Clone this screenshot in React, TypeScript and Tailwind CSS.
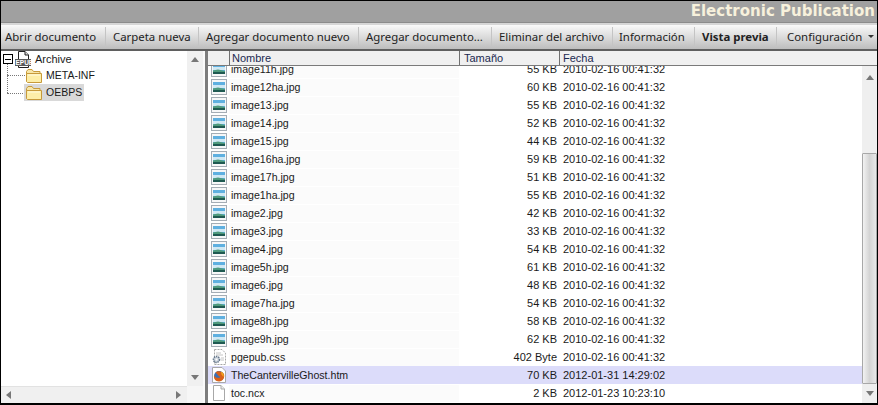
const toolbar = [
  { label: "Abrir documento", width: "w-[105px]", pad: "pl-[4px]" },
  { label: "Carpeta nueva", width: "w-[93px]", pad: "pl-[7px]" },
  { label: "Agregar documento nuevo", width: "w-[160px]", pad: "pl-[7px]" },
  { label: "Agregar documento...", width: "w-[133px]", pad: "pl-[7px]" },
  { label: "Eliminar del archivo", width: "w-[121px]", pad: "pl-[7px]" },
  { label: "Información", width: "w-[82px]", pad: "pl-[6px]" },
  { label: "Vista previa", width: "w-[82px]", pad: "pl-[7px]", bold: true },
];

const files = [
  ["image11h.jpg", "55 KB", "2010-02-16 00:41:32", "img"],
  ["image12ha.jpg", "60 KB", "2010-02-16 00:41:32", "img"],
  ["image13.jpg", "55 KB", "2010-02-16 00:41:32", "img"],
  ["image14.jpg", "52 KB", "2010-02-16 00:41:32", "img"],
  ["image15.jpg", "44 KB", "2010-02-16 00:41:32", "img"],
  ["image16ha.jpg", "59 KB", "2010-02-16 00:41:32", "img"],
  ["image17h.jpg", "51 KB", "2010-02-16 00:41:32", "img"],
  ["image1ha.jpg", "55 KB", "2010-02-16 00:41:32", "img"],
  ["image2.jpg", "42 KB", "2010-02-16 00:41:32", "img"],
  ["image3.jpg", "33 KB", "2010-02-16 00:41:32", "img"],
  ["image4.jpg", "54 KB", "2010-02-16 00:41:32", "img"],
  ["image5h.jpg", "61 KB", "2010-02-16 00:41:32", "img"],
  ["image6.jpg", "48 KB", "2010-02-16 00:41:32", "img"],
  ["image7ha.jpg", "54 KB", "2010-02-16 00:41:32", "img"],
  ["image8h.jpg", "58 KB", "2010-02-16 00:41:32", "img"],
  ["image9h.jpg", "62 KB", "2010-02-16 00:41:32", "img"],
  ["pgepub.css", "402 Byte", "2010-02-16 00:41:32", "css"],
  ["TheCantervilleGhost.htm", "70 KB", "2012-01-31 14:29:02", "htm"],
  ["toc.ncx", "2 KB", "2012-01-23 10:23:10", "doc"],
];

function ImageIcon() {
  return (
    <svg width="16" height="16" viewBox="0 0 16 16" className="shrink-0">
      <rect x="0.5" y="0.5" width="15" height="15" fill="#f6f7f8" stroke="#a4adb5" />
      <rect x="2" y="3" width="12" height="10" fill="#5fb0e0" />
      <rect x="2" y="6" width="12" height="3" fill="#cfe8f4" />
      <path d="M2 9.5 L7 8.5 L14 10 L14 13 L2 13 Z" fill="#4f9a7c" />
      <rect x="2" y="11" width="12" height="2" fill="#1f5a52" />
    </svg>
  );
}

function BlankDoc() {
  return (
    <svg width="16" height="16" viewBox="0 0 16 16" className="shrink-0">
      <path d="M2.5 0.5 H10 L13.5 4 V15.5 H2.5 Z" fill="#fff" stroke="#a8a8a8" />
      <path d="M10 0.5 V4 H13.5" fill="#eee" stroke="#a8a8a8" />
    </svg>
  );
}

function CssDoc() {
  return (
    <svg width="16" height="16" viewBox="0 0 16 16" className="shrink-0">
      <path d="M3.5 0.5 H11 L14.5 4 V15.5 H3.5 Z" fill="#fff" stroke="#a8a8a8" strokeDasharray="2 1" />
      <path d="M5 4 H10 M5 6 H12 M10 9 H13 M10 11 H13" stroke="#c4c4c4" />
      <circle cx="5.5" cy="10.5" r="3" fill="#cfd6de" stroke="#66788c" strokeWidth="1.6" strokeDasharray="1.4 0.8" />
      <circle cx="5.5" cy="10.5" r="1" fill="#fff" />
    </svg>
  );
}

function HtmDoc() {
  return (
    <svg width="16" height="16" viewBox="0 0 16 16" className="shrink-0">
      <path d="M1.5 0.5 H11 L14.5 4 V15.5 H1.5 Z" fill="#fff" stroke="#a8a8a8" />
      <circle cx="8" cy="9" r="5" fill="#3b6fb5" />
      <path d="M4.5 5.5 C6.5 3.5 10.5 3.5 13 7 C14 10.5 12 14.5 8 14.5 C4.5 14.5 2.5 11.5 3 8.5 C4.5 11 7.5 11.5 9.5 10 C8 9.5 7 8.5 6.5 7.5 Z" fill="#d9601a" />
      <path d="M10 4.5 C12.5 5.5 13 8 12.5 10 L10.5 7.5 Z" fill="#f2a81f" />
    </svg>
  );
}

function FileIcon({ kind }: { kind: string }) {
  if (kind === "img") return <ImageIcon />;
  if (kind === "css") return <CssDoc />;
  if (kind === "htm") return <HtmDoc />;
  return <BlankDoc />;
}

function Folder() {
  return (
    <svg width="16" height="14" viewBox="0 0 16 14" className="shrink-0">
      <path d="M0.5 12.5 V2.5 L2 0.5 H6 L7.5 2.5 H14 V4.5 H0.5" fill="#f7e6a8" stroke="#c79a3a" />
      <path d="M0.5 12.5 V4.5 H15.5 V13.5 H1.5 Z" fill="#fdeea8" stroke="#c79a3a" />
      <path d="M2 6 H14" stroke="#fffbe0" />
    </svg>
  );
}

function EpubIcon() {
  return (
    <svg width="16" height="17" viewBox="0 0 16 17" className="shrink-0">
      <path d="M3.5 0.5 H10 L13.5 4 V16.5 H3.5 Z" fill="#fff" stroke="#222" />
      <path d="M10 0.5 V4 H13.5" fill="#ddd" stroke="#222" />
      <rect x="0" y="8" width="16" height="7" fill="#5a5a5a" />
      <text x="0.5" y="14" fontSize="6.5" fontWeight="700" fill="#fff" fontFamily="Liberation Sans, sans-serif">EPUB</text>
    </svg>
  );
}

function Arrow({ dir }: { dir: "up" | "down" | "left" | "right" }) {
  const points = {
    up: "0,5 4,0 8,5",
    down: "0,0 8,0 4,5",
    left: "5,0 5,8 0,4",
    right: "0,0 0,8 5,4",
  }[dir];
  const size = dir === "up" || dir === "down" ? "w-2 h-[5px]" : "w-[5px] h-2";
  const box = dir === "up" || dir === "down" ? "0 0 8 5" : "0 0 5 8";
  return (
    <svg viewBox={box} className={size}>
      <polygon points={points} fill="#777" />
    </svg>
  );
}

function TreeRow({ label, selected }: { label: string; selected?: boolean }) {
  return (
    <div className="h-[17px] flex items-center pl-[23px]">
      <div className={`flex items-center h-[17px] pl-[2px] pr-[2px] gap-[4px] ${selected ? "bg-[#d9d9d9]" : ""}`}>
        <Folder />
        <span className="text-[10.5px]">{label}</span>
      </div>
    </div>
  );
}

export default function App() {
  return (
    <div className="w-[878px] h-[405px] overflow-hidden bg-white border border-black border-b-2 flex flex-col font-['Liberation_Sans',Arial,sans-serif] text-[11px] text-[#1a1a1a]">
      <div className="h-[22px] shrink-0 bg-[#a0a0a0] flex items-center justify-end pr-[2px] border-b border-[#8c8c8c]">
        <span className="font-['DejaVu_Sans',sans-serif] font-bold text-[15px] text-[#f7f1dc] leading-none">Electronic Publication</span>
      </div>
      <div className="h-[2px] shrink-0 bg-[#d6d6d6]" />
      <div className="h-[26px] shrink-0 flex items-center bg-gradient-to-b from-[#fafafa] to-[#bdbdbd] border-b-2 border-[#5f5f5f] font-['Noto_Sans',sans-serif] text-[11.4px] text-[#222]">
        {toolbar.map((item) => (
          <div
            key={item.label}
            className={`${item.width} ${item.pad} shrink-0 h-[20px] flex items-center border-r border-[#c4c4c4] whitespace-nowrap ${item.bold ? "font-bold" : ""}`}
          >
            {item.label}
          </div>
        ))}
        <div className="flex-1 flex items-center justify-between pl-[10px] pr-[3px] whitespace-nowrap">
          <span>Configuración</span>
          <svg viewBox="0 0 6 3" className="w-[6px] h-[3px]">
            <polygon points="0,0 6,0 3,3" fill="#333" />
          </svg>
        </div>
      </div>

      <div className="flex-1 min-h-0 flex">
        <div className="w-[202px] shrink-0 flex flex-col">
          <div className="flex-1 min-h-0 flex">
            <div className="relative flex-1 min-w-0">
              <div className="h-[16px] flex items-center gap-[2px] pl-[2px] relative z-10">
                <div className="w-[10px] h-[10px] border border-black bg-white flex items-center justify-center">
                  <div className="w-[6px] h-px bg-black" />
                </div>
                <EpubIcon />
                <span className="pl-[2px]">Archive</span>
              </div>
              <div className="absolute left-[6px] top-[12px] h-[30px] border-l border-dotted border-[#777]" />
              <div className="absolute left-[6px] top-[24px] w-[18px] border-t border-dotted border-[#777]" />
              <div className="absolute left-[6px] top-[42px] w-[18px] border-t border-dotted border-[#777]" />
              <div className="relative">
                <TreeRow label="META-INF" />
                <TreeRow label="OEBPS" selected />
              </div>
            </div>
            <div className="w-[16px] shrink-0 bg-[#f0f0f0] flex flex-col items-center justify-between pt-[6px] pb-[6px]">
              <Arrow dir="up" />
              <Arrow dir="down" />
            </div>
          </div>
          <div className="h-[17px] shrink-0 flex">
            <div className="flex-1 bg-[#f0f0f0] border-t border-[#e2e2e2] flex items-center justify-between pl-[5px] pr-[6px]">
              <Arrow dir="left" />
              <Arrow dir="right" />
            </div>
            <div className="w-[16px] shrink-0 bg-[#f6f6f6]" />
          </div>
        </div>

        <div className="w-[5px] shrink-0 bg-[#f4f4f4] border-l-[2px] border-r-[3px] border-l-[#fafafa] border-r-[#7d7d7d]" />

        <div className="flex-1 min-w-0 flex flex-col">
          <div className="h-[15px] shrink-0 flex bg-[#f0f0f0] border-b border-[#7a7a7a] text-[#1c2a50] leading-none">
            <div className="w-[22px] shrink-0 border-r border-[#707070]" />
            <div className="w-[230px] shrink-0 pl-[2px] flex items-center border-r border-[#707070]">Nombre</div>
            <div className="w-[100px] shrink-0 pl-[4px] flex items-center border-r border-[#707070]">Tamaño</div>
            <div className="flex-1 pl-[3px] flex items-center">Fecha</div>
          </div>
          <div className="flex-1 min-h-0 flex">
            <div className="flex-1 min-w-0 overflow-hidden">
              <div className="mt-[-6px]">
                {files.map(([name, size, date, kind]) => {
                  const selected = kind === "htm";
                  return (
                    <div key={name} className={`h-[18px] flex items-center ${selected ? "bg-[#dcdcfa]" : ""}`}>
                      <div className="w-[21px] shrink-0 flex justify-start pl-[3px]">
                        <FileIcon kind={kind} />
                      </div>
                      <div className={`w-[230px] h-[17px] shrink-0 pl-[2px] pt-[1px] flex items-center text-[10.6px] ${selected ? "" : "bg-[#fbfbfb]"}`}>{name}</div>
                      <div className="w-[98px] shrink-0 text-right">{size}</div>
                      <div className="pl-[6px] whitespace-nowrap">{date}</div>
                    </div>
                  );
                })}
              </div>
            </div>
            <div className="w-[15px] shrink-0 bg-[#efefef] flex flex-col">
              <div className="h-[20px] shrink-0 flex items-center justify-center pt-[2px]">
                <Arrow dir="up" />
              </div>
              <div className="flex-1 min-h-0 pt-[67px]">
                <div className="h-full bg-gradient-to-r from-[#f2f2f2] via-[#d4d4d4] to-[#e8e8e8] border border-[#a8a8a8] rounded-[1px]" />
              </div>
              <div className="h-[19px] shrink-0 flex items-center justify-center">
                <Arrow dir="down" />
              </div>
            </div>
          </div>
        </div>
      </div>
    </div>
  );
}
